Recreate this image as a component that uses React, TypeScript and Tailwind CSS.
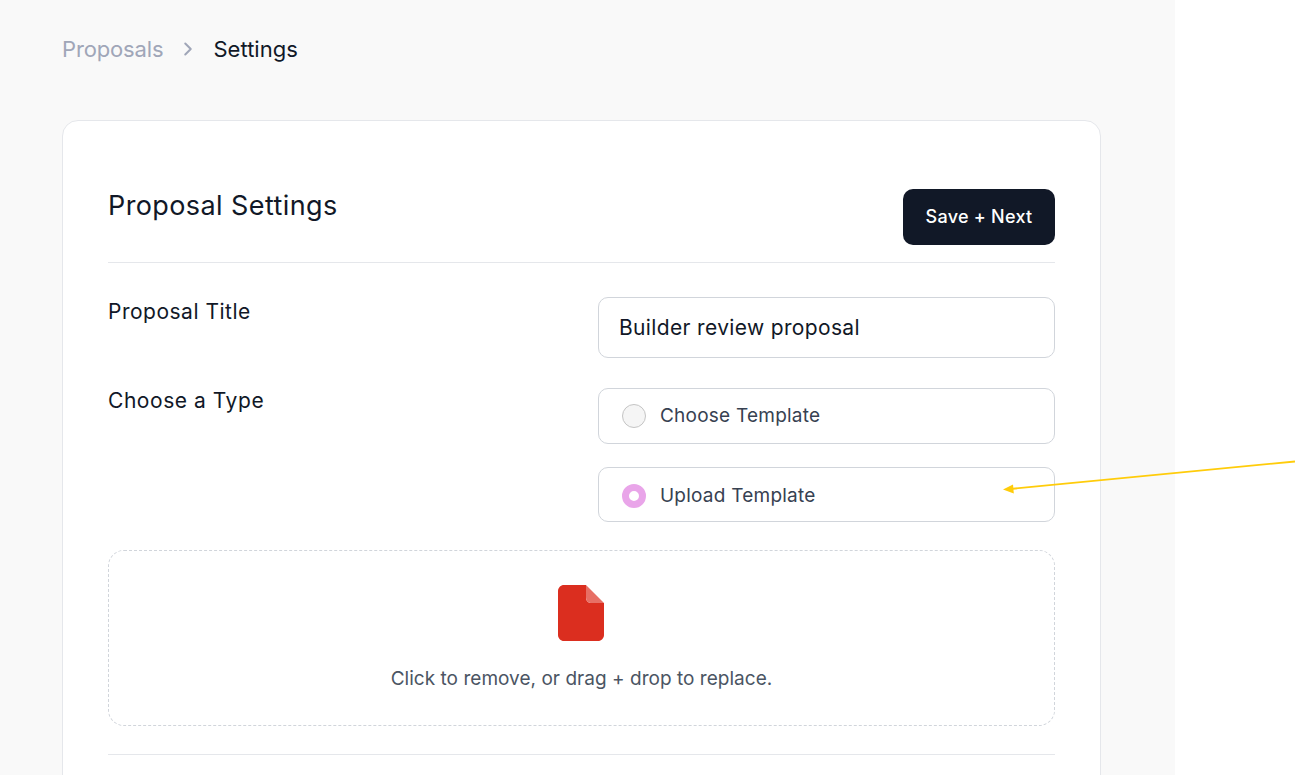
import { ChevronRight } from "lucide-react";

function FileIcon() {
  return (
    <svg width="46" height="56" viewBox="0 0 46 56" fill="none" className="mr-[1px]">
      <path
        d="M6 0H28V12C28 16 30 18 34 18H46V50C46 53.3 43.3 56 40 56H6C2.7 56 0 53.3 0 50V6C0 2.7 2.7 0 6 0Z"
        fill="#DB2E1F"
      />
      <path d="M28 0L46 18H34C30 18 28 16 28 12V0Z" fill="#E76F65" />
    </svg>
  );
}

function Arrow() {
  return (
    <svg
      className="absolute left-[1000px] top-[455px] pointer-events-none"
      width="295"
      height="40"
      viewBox="0 0 295 40"
      fill="none"
    >
      <path d="M295 6.5L10 34" stroke="#FFCC0A" strokeWidth="1.8" />
      <path d="M3 34.5L13 29.5L13.8 38.5Z" fill="#FFCC0A" />
    </svg>
  );
}

export default function App() {
  return (
    <div className="relative flex h-[775px] overflow-hidden bg-white font-['Inter',sans-serif]">
      <main className="w-[1175px] bg-[#f9f9f9] pl-[62px] pr-[74px] pt-[35px]">
        {/* Breadcrumb */}
        <nav className="flex h-[28px] items-center text-[22px] text-[#a0a6b8]">
          <span className="tracking-[-0.14px]">Proposals</span>
          <ChevronRight size={22} strokeWidth={2.2} className="ml-[14px] mr-[14px]" />
          <span className="tracking-[0.02px] text-[#111827]">Settings</span>
        </nav>

        {/* Card */}
        <section className="mt-[57px] h-[700px] rounded-[16px] border border-[#e5e7eb] bg-white px-[45px] pt-[68px]">
          <div className="flex items-start justify-between border-b border-[#e5e7eb] pb-[17px]">
            <h1 className="text-[27px] leading-[34px] font-normal tracking-[0.4px] text-[#111827]">
              Proposal Settings
            </h1>
            <button className="h-[56px] w-[152px] rounded-[10px] bg-[#111827] pb-[2px] text-[18px] font-medium tracking-[0.25px] text-white">
              Save + Next
            </button>
          </div>

          <div className="mt-[34px] flex items-start justify-between">
            <label className="mt-[1px] text-[21px] leading-[28px] tracking-[0.5px] text-[#111827]">
              Proposal Title
            </label>
            <div className="flex h-[61px] w-[457px] items-center rounded-[10px] border border-[#d1d5db] px-[20px] text-[21px] tracking-[0.35px] text-[#111827]">
              Builder review proposal
            </div>
          </div>

          <div className="mt-[30px] flex items-start justify-between">
            <label className="mt-[-1px] text-[21px] leading-[28px] tracking-[0.55px] text-[#111827]">
              Choose a Type
            </label>
            <div className="flex w-[457px] flex-col gap-[23px]">
              <div className="flex h-[56px] items-center gap-[14px] rounded-[10px] border border-[#d1d5db] pl-[23px] text-[19px] tracking-[0.23px] text-[#374151]">
                <span className="h-[24px] w-[24px] rounded-full border border-[#c4c4c4] bg-[#f5f5f5]" />
                Choose Template
              </div>
              <div className="flex h-[55px] items-center gap-[14px] rounded-[10px] border border-[#d1d5db] pl-[23px] pt-[3px] text-[19px] tracking-[0.23px] text-[#374151]">
                <span className="h-[24px] w-[24px] rounded-full border-[7px] border-[#e9a5e9] bg-white" />
                Upload Template
              </div>
            </div>
          </div>

          {/* Upload */}
          <div className="mt-[28px] flex h-[176px] flex-col items-center rounded-[16px] border border-dashed border-[#d1d5db] pt-[34px]">
            <FileIcon />
            <p className="mt-[24px] text-[19px] leading-[28px] tracking-[0.03px] text-[#4b5563]">
              Click to remove, or drag + drop to replace.
            </p>
          </div>

          <div className="mt-[28px] border-t border-[#e5e7eb]" />
        </section>
      </main>
      <Arrow />
    </div>
  );
}
